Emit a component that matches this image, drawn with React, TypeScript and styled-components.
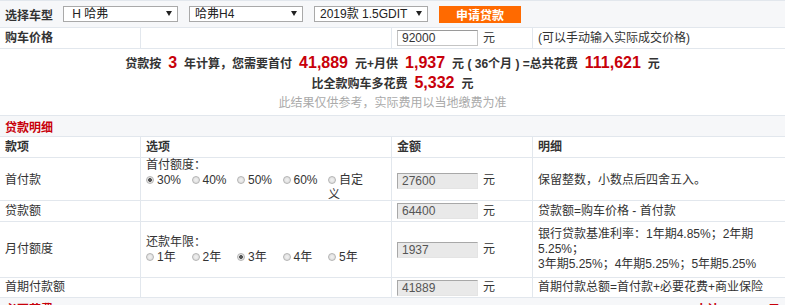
import React from 'react';
import styled, { createGlobalStyle } from 'styled-components';

const GlobalStyle = createGlobalStyle`
  body {
    margin: 0;
    background: #fff;
    font-family: 'Liberation Sans', Arial, 'Noto Sans CJK SC', sans-serif;
    font-size: 12px;
    color: #333;
  }
`;

const LINE = '#e2e7ed';
const SOFT_BG = '#f6f7f9';
const RED = '#c8000a';

const Calculator = styled.div`
  width: 785px;
  border-top: 1px solid ${LINE};
`;

const TopBar = styled.div`
  display: flex;
  align-items: center;
  gap: 11px;
  height: 26px;
  padding: 0 5px;
  background: ${SOFT_BG};
  border-bottom: 1px solid ${LINE};
`;

const BarLabel = styled.span`
  font-weight: bold;
  margin-right: -1px;
`;

const FakeSelect = styled.div<{ $w: number }>`
  position: relative;
  box-sizing: border-box;
  width: ${(p) => p.$w}px;
  height: 16px;
  line-height: 14px;
  padding-left: 5px;
  border: 1px solid #a9a9a9;
  background: #fff;
  color: #222;
  white-space: nowrap;
  overflow: hidden;

  &::after {
    content: '';
    position: absolute;
    right: 5px;
    top: 4px;
    border-left: 3px solid transparent;
    border-right: 3px solid transparent;
    border-top: 5px solid #222;
  }
`;

const ApplyButton = styled.button`
  width: 82px;
  height: 17px;
  padding: 0;
  border: none;
  background: #ff6a00;
  color: #fff;
  font: bold 12px 'Noto Sans CJK SC', sans-serif;
  line-height: 17px;
`;

const Row = styled.div<{ $h: number; $bg?: string }>`
  display: grid;
  grid-template-columns: 140px 251px 141px 1fr;
  height: ${(p) => p.$h}px;
  background: ${(p) => p.$bg || '#fff'};
  border-bottom: 1px solid ${LINE};

  & > * + * {
    border-left: 1px solid ${LINE};
  }
`;

const Cell = styled.div<{ $bold?: boolean }>`
  display: flex;
  align-items: center;
  padding: 0 5px;
  font-weight: ${(p) => (p.$bold ? 'bold' : 'normal')};
  line-height: 15px;
`;

const WideCell = styled.div<{ $color?: string }>`
  grid-column: 1 / -1;
  display: flex;
  align-items: center;
  justify-content: space-between;
  padding: 0 5px;
  font-weight: bold;
  color: ${(p) => p.$color || '#333'};
`;

const PriceInput = styled.div`
  box-sizing: border-box;
  width: 81px;
  height: 16px;
  line-height: 14px;
  padding-left: 4px;
  border: 1px solid #c4c4c4;
  border-top-color: #9a9a9a;
  background: #fff;
  color: #333;
`;

const AmountBox = styled(PriceInput)`
  background: #e9e9e9;
  border-color: #a8a8a8 #e4e4e4 #e4e4e4 #a8a8a8;
  color: #555;
`;

const Unit = styled.span`
  margin-left: 5px;
`;

const Summary = styled.div`
  height: 67px;
  padding-top: 4px;
  box-sizing: border-box;
  text-align: center;
  border-bottom: 1px solid ${LINE};
`;

const SummaryLine = styled.div<{ $muted?: boolean }>`
  height: 20px;
  line-height: 20px;
  font-weight: ${(p) => (p.$muted ? 'normal' : 'bold')};
  color: ${(p) => (p.$muted ? '#aaa' : '#333')};
  white-space: pre;
`;

const Figure = styled.span`
  font-size: 16px;
  font-weight: bold;
  color: ${RED};
  margin: 0 7px;
`;

const OptionBlock = styled.div`
  line-height: 15px;
`;

const Choice = styled.span`
  display: inline-block;
  width: 45.5px;
  vertical-align: top;
`;

const Dot = styled.span<{ $on?: boolean }>`
  display: inline-block;
  box-sizing: border-box;
  width: 8px;
  height: 8px;
  margin-right: 3px;
  border-radius: 50%;
  border: 1px solid #b4b4b4;
  background: ${(p) =>
    p.$on
      ? 'radial-gradient(circle, #555 0 1.6px, #e4e4e4 2.2px)'
      : 'radial-gradient(circle, #f2f2f2 0, #d8d8d8 100%)'};
  vertical-align: 0px;
`;

const Options: React.FC<{ title: string; items: string[]; on: number }> = ({ title, items, on }) => (
  <OptionBlock>
    {title}
    <br />
    {items.map((it, i) => (
      <Choice key={it}>
        <Dot $on={i === on} />
        {it}
      </Choice>
    ))}
  </OptionBlock>
);

const App: React.FC = () => (
  <>
    <GlobalStyle />
    <Calculator>
      <TopBar>
        <BarLabel>选择车型</BarLabel>
        <FakeSelect $w={115}>{'\u00a0H 哈弗'}</FakeSelect>
        <FakeSelect $w={114}>哈弗H4</FakeSelect>
        <FakeSelect $w={114}>2019款 1.5GDIT</FakeSelect>
        <ApplyButton>申请贷款</ApplyButton>
      </TopBar>

      <Row $h={20}>
        <Cell $bold>购车价格</Cell>
        <Cell />
        <Cell>
          <PriceInput>92000</PriceInput>
          <Unit>元</Unit>
        </Cell>
        <Cell>(可以手动输入实际成交价格)</Cell>
      </Row>

      <Summary>
        <SummaryLine>
          贷款按<Figure>3</Figure>年计算，您需要首付<Figure>41,889</Figure>元+月供<Figure>1,937</Figure>
          {'元 ( 36个月 ) =总共花费'}
          <Figure>111,621</Figure>元
        </SummaryLine>
        <SummaryLine>
          比全款购车多花费<Figure>5,332</Figure>元
        </SummaryLine>
        <SummaryLine $muted>此结果仅供参考，实际费用以当地缴费为准</SummaryLine>
      </Summary>

      <Row $h={20} $bg={SOFT_BG}>
        <WideCell $color={RED}>贷款明细</WideCell>
      </Row>

      <Row $h={20}>
        <Cell $bold>款项</Cell>
        <Cell $bold>选项</Cell>
        <Cell $bold>金额</Cell>
        <Cell $bold>明细</Cell>
      </Row>

      <Row $h={42}>
        <Cell>首付款</Cell>
        <Cell>
          <Options title="首付额度：" items={['30%', '40%', '50%', '60%', '自定义']} on={0} />
        </Cell>
        <Cell>
          <AmountBox>27600</AmountBox>
          <Unit>元</Unit>
        </Cell>
        <Cell>保留整数，小数点后四舍五入。</Cell>
      </Row>

      <Row $h={20}>
        <Cell>贷款额</Cell>
        <Cell />
        <Cell>
          <AmountBox>64400</AmountBox>
          <Unit>元</Unit>
        </Cell>
        <Cell>贷款额=购车价格 - 首付款</Cell>
      </Row>

      <Row $h={55}>
        <Cell>月付额度</Cell>
        <Cell>
          <Options title="还款年限：" items={['1年', '2年', '3年', '4年', '5年']} on={2} />
        </Cell>
        <Cell>
          <AmountBox>1937</AmountBox>
          <Unit>元</Unit>
        </Cell>
        <Cell>
          <div>
            银行贷款基准利率：1年期4.85%；2年期
            <br />
            5.25%；
            <br />
            3年期5.25%；4年期5.25%；5年期5.25%
          </div>
        </Cell>
      </Row>

      <Row $h={19}>
        <Cell>首期付款额</Cell>
        <Cell />
        <Cell>
          <AmountBox>41889</AmountBox>
          <Unit>元</Unit>
        </Cell>
        <Cell>首期付款总额=首付款+必要花费+商业保险</Cell>
      </Row>

      <Row $h={20} $bg={SOFT_BG}>
        <WideCell $color={RED}>
          <span>必要花费</span>
          <span>小计：12,812元</span>
        </WideCell>
      </Row>
    </Calculator>
  </>
);

export default App;
